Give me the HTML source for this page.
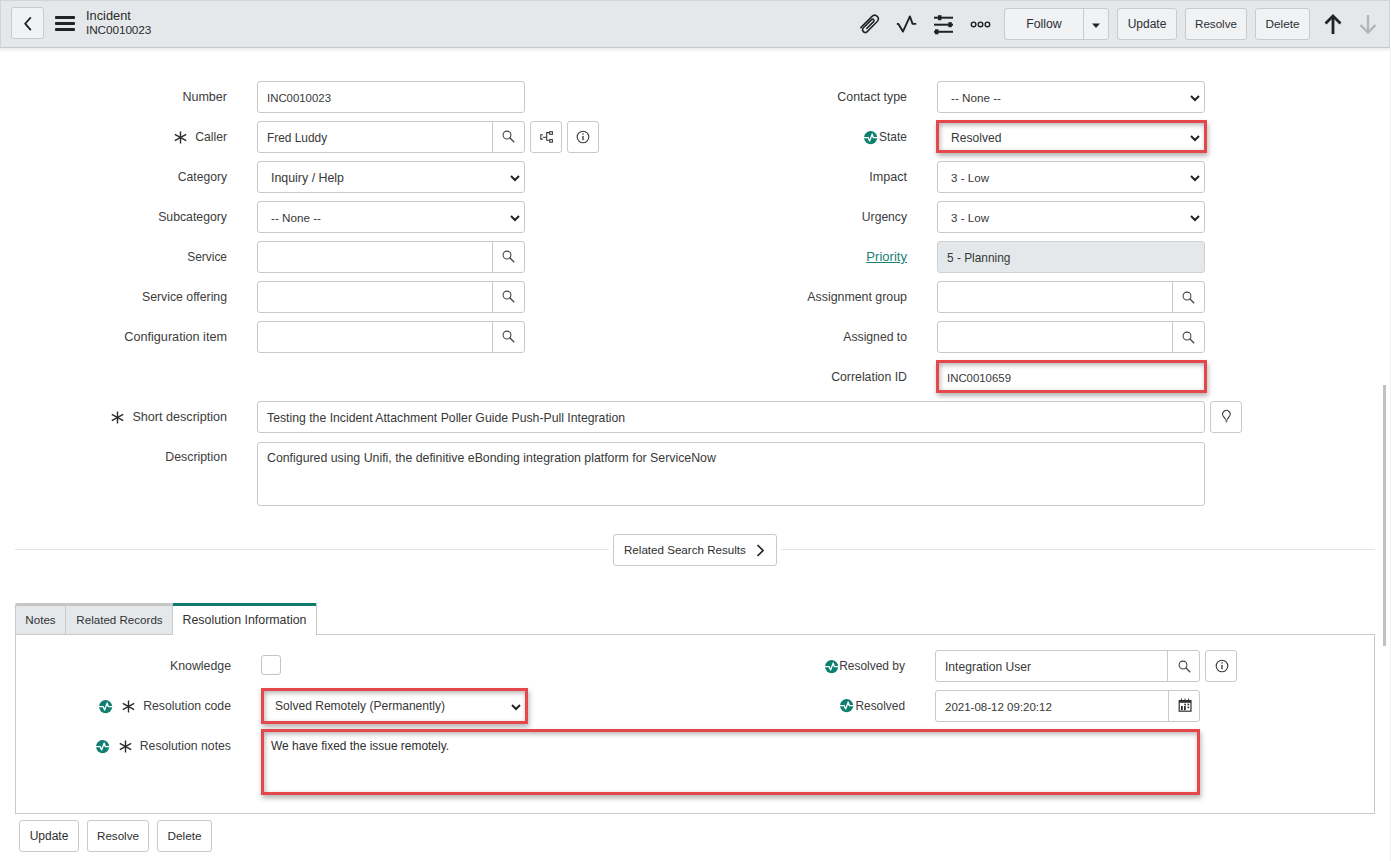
<!DOCTYPE html><html><head><meta charset="utf-8"><style>
*{box-sizing:border-box;}
html,body{margin:0;padding:0;}
body{width:1391px;height:861px;overflow:hidden;background:#fff;font-family:"Liberation Sans",sans-serif;font-size:12px;color:#2e2e2e;position:relative;}
.a{position:absolute;}
svg{position:absolute;overflow:visible;}
#hdr{left:0;top:0;width:1390px;height:48px;background:#e4e8eb;border:1px solid #d2d5d8;border-bottom:1px solid #c6c9cd;}
#hdrsh{left:0;top:48px;width:1390px;height:4px;background:linear-gradient(#ececec,#fff);}
.hb{position:absolute;top:8px;height:32px;background:#f1f2f4;border:1px solid #c8cbce;border-radius:3px;text-align:center;line-height:30px;color:#2b2f33;white-space:nowrap;}
.lbl{position:absolute;text-align:right;line-height:32px;height:32px;white-space:nowrap;color:#3c3c3c;font-size:12.1px;}
.inp{position:absolute;height:32px;border:1px solid #c9c9c9;border-radius:3px;background:#fff;line-height:32px;font-size:12.1px;padding-left:9px;white-space:nowrap;color:#383838;}
.sel{padding-left:13px;}
.btn{position:absolute;height:32px;border:1px solid #c9c9c9;border-radius:3px;background:#fff;}
.red{position:absolute;border:3px solid #e4474c;box-shadow:1px 3px 5px rgba(0,0,0,.3), inset 1px 2px 5px rgba(0,0,0,.3);}
.fb{position:absolute;height:32px;border:1px solid #c9c9c9;border-radius:3px;background:#fff;text-align:center;line-height:30px;color:#2e2e2e;}
</style></head><body>
<div id="hdr" class="a"></div><div id="hdrsh" class="a"></div>
<div class="hb" style="left:11px;top:7px;width:33px;"></div>
<svg style="left:22.5px;top:15.5px" width="10" height="16"><path d="M7.8 1.3 L2.2 7.7 L7.8 14.1" fill="none" stroke="#222" stroke-width="1.8"/></svg>
<div class="a" style="left:55px;top:16px;width:20px;height:3px;background:#222;border-radius:1px"></div>
<div class="a" style="left:55px;top:22px;width:20px;height:3px;background:#222;border-radius:1px"></div>
<div class="a" style="left:55px;top:28px;width:20px;height:3px;background:#222;border-radius:1px"></div>
<div class="a" style="left:86px;top:9px;line-height:14px;font-size:12.8px;color:#2b2b2b">Incident</div>
<div class="a" style="left:86px;top:23px;line-height:14px;font-size:11.8px;color:#2b2b2b;letter-spacing:-0.1px">INC0010023</div>
<svg style="left:859px;top:12px" width="22" height="22"><path d="M1.8 15.6 L12.8 4.6 Q15.6 1.8 18.2 4.4 Q20.8 7 18 9.8 L8.2 19.6 Q6.3 21.5 4.4 19.6 Q2.5 17.7 4.4 15.8 L12.6 7.6 Q13.6 6.6 14.6 7.6 Q15.6 8.6 14.6 9.6 L7.8 16.4" fill="none" stroke="#222" stroke-width="1.5" stroke-linejoin="round" stroke-linecap="round"/></svg>
<svg style="left:896px;top:13px" width="22" height="22"><path d="M0.8 10.9 H2.4 L6.9 18.6 L13.9 3.4 L16.6 10.9 H20.3" fill="none" stroke="#222" stroke-width="1.9" stroke-linejoin="round"/></svg>
<svg style="left:934px;top:13px" width="20" height="22"><g stroke="#222" stroke-width="2"><path d="M0 4.7 H19"/><path d="M0 11.7 H19"/><path d="M0 18.8 H19"/></g><rect x="4" y="2.2" width="3.5" height="5" fill="#222"/><rect x="14.3" y="9.2" width="3.5" height="5" fill="#222"/><rect x="1" y="16.3" width="3.5" height="5" fill="#222"/></svg>
<svg style="left:969px;top:19px" width="24" height="12"><g fill="none" stroke="#222" stroke-width="1.4"><circle cx="4.6" cy="5.4" r="2.3"/><circle cx="11.5" cy="5.4" r="2.3"/><circle cx="18.4" cy="5.4" r="2.3"/></g></svg>
<div class="hb" style="left:1004px;width:105px;"></div>
<div class="a" style="left:1083px;top:9px;width:1px;height:30px;background:#c8cbce"></div>
<div class="a" style="left:1004px;top:8px;width:80px;line-height:32px;text-align:center;color:#2b2f33;font-size:12.3px">Follow</div>
<svg style="left:1091px;top:23px" width="10" height="6"><path d="M1 0.5 H9 L5 5 Z" fill="#222"/></svg>
<div class="hb" style="left:1117px;width:60px;">Update</div>
<div class="hb" style="left:1185px;width:62px;"><span style="font-size:11.6px">Resolve</span></div>
<div class="hb" style="left:1255px;width:55px;"><span style="font-size:11.8px">Delete</span></div>
<svg style="left:1324px;top:14px" width="20" height="21"><g fill="none" stroke="#222" stroke-width="2.8"><path d="M9 2.5 V20"/><path d="M1.5 9.5 L9 2 L16.5 9.5"/></g></svg>
<svg style="left:1359px;top:14px" width="20" height="21"><g fill="none" stroke="#b3b6b9" stroke-width="2.3"><path d="M9 1 V18.5"/><path d="M1.5 11 L9 18.5 L16.5 11"/></g></svg>
<div class="lbl" style="left:0;width:227px;top:81px;font-size:12.56px">Number</div>
<div class="inp" style="left:257px;top:81px;width:268px"><span style="font-size:11.4px">INC0010023</span></div>
<div class="lbl" style="left:0;width:227px;top:121px;font-size:12.2px">Caller</div>
<div class="inp" style="left:257px;top:121px;width:268px"><span style="font-size:11.9px">Fred Luddy</span></div>
<div class="a" style="left:492px;top:121px;width:1px;height:32px;background:#c9c9c9"></div>
<svg style="left:501.6px;top:130.4px" width="14" height="14"><circle cx="5" cy="5" r="3.9" fill="none" stroke="#444" stroke-width="1.05"/><path d="M7.8 7.8 L12.2 12.2" stroke="#444" stroke-width="1.25"/></svg>
<div class="lbl" style="left:0;width:227px;top:161px;font-size:12.13px">Category</div>
<div class="inp sel" style="left:257px;top:161px;width:268px"><span style="font-size:12.4px">Inquiry / Help</span></div>
<svg style="left:510px;top:175px" width="10" height="6"><path d="M1 1 L5 5 L9 1" fill="none" stroke="#222" stroke-width="2"/></svg>
<div class="lbl" style="left:0;width:227px;top:201px;font-size:12.27px">Subcategory</div>
<div class="inp sel" style="left:257px;top:201px;width:268px"><span style="font-size:11.7px">-- None --</span></div>
<svg style="left:510px;top:215px" width="10" height="6"><path d="M1 1 L5 5 L9 1" fill="none" stroke="#222" stroke-width="2"/></svg>
<div class="lbl" style="left:0;width:227px;top:241px;font-size:11.93px">Service</div>
<div class="inp" style="left:257px;top:241px;width:268px"></div>
<div class="a" style="left:492px;top:241px;width:1px;height:32px;background:#c9c9c9"></div>
<svg style="left:501.6px;top:250.4px" width="14" height="14"><circle cx="5" cy="5" r="3.9" fill="none" stroke="#444" stroke-width="1.05"/><path d="M7.8 7.8 L12.2 12.2" stroke="#444" stroke-width="1.25"/></svg>
<div class="lbl" style="left:0;width:227px;top:281px;font-size:12.27px">Service offering</div>
<div class="inp" style="left:257px;top:281px;width:268px"></div>
<div class="a" style="left:492px;top:281px;width:1px;height:32px;background:#c9c9c9"></div>
<svg style="left:501.6px;top:290.4px" width="14" height="14"><circle cx="5" cy="5" r="3.9" fill="none" stroke="#444" stroke-width="1.05"/><path d="M7.8 7.8 L12.2 12.2" stroke="#444" stroke-width="1.25"/></svg>
<div class="lbl" style="left:0;width:227px;top:321px;font-size:12.67px">Configuration item</div>
<div class="inp" style="left:257px;top:321px;width:268px"></div>
<div class="a" style="left:492px;top:321px;width:1px;height:32px;background:#c9c9c9"></div>
<svg style="left:501.6px;top:330.4px" width="14" height="14"><circle cx="5" cy="5" r="3.9" fill="none" stroke="#444" stroke-width="1.05"/><path d="M7.8 7.8 L12.2 12.2" stroke="#444" stroke-width="1.25"/></svg>
<svg style="left:174px;top:131px" width="13" height="13"><g stroke="#2a2a2a" stroke-width="1.4" fill="none"><path d="M6.5 0.5 V12.5"/><path d="M0.8 3.4 L12.2 9.6"/><path d="M0.8 9.6 L12.2 3.4"/></g></svg>
<div class="btn" style="left:530px;top:121px;width:32px"></div>
<svg style="left:530px;top:122px" width="32" height="30"><g fill="none" stroke="#333" stroke-width="1.05"><path d="M12.9 12.7 H10.8 V17.1 H12.9"/><path d="M13 15.3 H16.7"/><path d="M16.7 10.6 V18.2 M16.2 10.6 H19.4 M16.2 18.2 H19.4"/><rect x="19.7" y="9.7" width="2.7" height="2.6"/><rect x="19.7" y="17.6" width="2.7" height="2.6"/></g></svg>
<div class="btn" style="left:567px;top:121px;width:32px"></div>
<svg style="left:575.3px;top:129.2px" width="16" height="16"><circle cx="8" cy="8" r="5.8" fill="none" stroke="#3a3a3a" stroke-width="1.1"/><rect x="7.35" y="6.9" width="1.3" height="4.3" fill="#333"/><rect x="7.35" y="4.3" width="1.3" height="1.3" fill="#333"/></svg>
<div class="lbl" style="left:700px;width:207px;top:81px;font-size:12.42px">Contact type</div>
<div class="inp sel" style="left:937px;top:81px;width:268px"><span style="font-size:11.7px">-- None --</span></div>
<svg style="left:1190px;top:95px" width="10" height="6"><path d="M1 1 L5 5 L9 1" fill="none" stroke="#222" stroke-width="2"/></svg>
<div class="lbl" style="left:700px;width:207px;top:121px;font-size:11.98px">State</div>
<div class="inp sel" style="left:937px;top:121px;width:268px">Resolved</div>
<svg style="left:1190px;top:135px" width="10" height="6"><path d="M1 1 L5 5 L9 1" fill="none" stroke="#222" stroke-width="2"/></svg>
<div class="lbl" style="left:700px;width:207px;top:161px;font-size:12.59px">Impact</div>
<div class="inp sel" style="left:937px;top:161px;width:268px"><span style="font-size:11.6px">3 - Low</span></div>
<svg style="left:1190px;top:175px" width="10" height="6"><path d="M1 1 L5 5 L9 1" fill="none" stroke="#222" stroke-width="2"/></svg>
<div class="lbl" style="left:700px;width:207px;top:201px;font-size:12.13px">Urgency</div>
<div class="inp sel" style="left:937px;top:201px;width:268px"><span style="font-size:11.6px">3 - Low</span></div>
<svg style="left:1190px;top:215px" width="10" height="6"><path d="M1 1 L5 5 L9 1" fill="none" stroke="#222" stroke-width="2"/></svg>
<div class="lbl" style="left:700px;width:207px;top:241px;color:#1b7f72;text-decoration:underline;font-size:13.09px">Priority</div>
<div class="inp" style="left:937px;top:241px;width:268px;background:#e4e8eb;border-color:#cfd2d5"><span style="font-size:11.9px">5 - Planning</span></div>
<div class="lbl" style="left:700px;width:207px;top:281px;font-size:12.38px">Assignment group</div>
<div class="inp" style="left:937px;top:281px;width:268px"></div>
<div class="a" style="left:1172px;top:281px;width:1px;height:32px;background:#c9c9c9"></div>
<svg style="left:1182.2px;top:290.6px" width="14" height="14"><circle cx="5" cy="5" r="3.9" fill="none" stroke="#444" stroke-width="1.05"/><path d="M7.8 7.8 L12.2 12.2" stroke="#444" stroke-width="1.25"/></svg>
<div class="lbl" style="left:700px;width:207px;top:321px;font-size:12.2px">Assigned to</div>
<div class="inp" style="left:937px;top:321px;width:268px"></div>
<div class="a" style="left:1172px;top:321px;width:1px;height:32px;background:#c9c9c9"></div>
<svg style="left:1182.2px;top:330.6px" width="14" height="14"><circle cx="5" cy="5" r="3.9" fill="none" stroke="#444" stroke-width="1.05"/><path d="M7.8 7.8 L12.2 12.2" stroke="#444" stroke-width="1.25"/></svg>
<div class="lbl" style="left:700px;width:207px;top:361px;font-size:12.31px">Correlation ID</div>
<div class="inp" style="left:937px;top:361px;width:268px"><span style="font-size:11.4px">INC0010659</span></div>
<svg style="left:863.8px;top:130.8px" width="13.2" height="13.2"><circle cx="6.6" cy="6.6" r="6.6" fill="#0f7f70"/><path d="M0 6.6 H4.1 L5.6 10.0 L8.2 2.9999999999999996 L9.3 6.6 H13.2" fill="none" stroke="#fff" stroke-width="1.3" stroke-linejoin="round"/></svg>
<div class="red" style="left:936px;top:120px;width:271px;height:33px"></div>
<div class="red" style="left:936px;top:360px;width:271px;height:33px"></div>
<svg style="left:111px;top:411px" width="13" height="13"><g stroke="#2a2a2a" stroke-width="1.4" fill="none"><path d="M6.5 0.5 V12.5"/><path d="M0.8 3.4 L12.2 9.6"/><path d="M0.8 9.6 L12.2 3.4"/></g></svg>
<div class="lbl" style="left:0;width:227px;top:401px;font-size:12.61px">Short description</div>
<div class="inp" style="left:257px;top:401px;width:948px"><span style="font-size:12.25px">Testing the Incident Attachment Poller Guide Push-Pull Integration</span></div>
<div class="btn" style="left:1210px;top:401px;width:32px"></div>
<svg style="left:1220px;top:408px" width="13" height="16"><g fill="none" stroke="#3a3a3a" stroke-width="1.05"><path d="M5.6 11.4 L3.6 8.6 A3.7 3.7 0 1 1 9.2 8.6 L7.2 11.4"/><path d="M5.5 12.6 L7.5 11.8 M5.7 14 L7.3 13.4"/></g></svg>
<div class="lbl" style="left:0;width:227px;top:441px;font-size:12.34px">Description</div>
<div class="inp" style="left:257px;top:442px;width:948px;height:64px;line-height:30px"><span style="font-size:12.34px">Configured using Unifi, the definitive eBonding integration platform for ServiceNow</span></div>
<div class="a" style="left:15px;top:549px;width:594px;height:1px;background:#e3e3e3"></div>
<div class="a" style="left:781px;top:549px;width:594px;height:1px;background:#e3e3e3"></div>
<div class="btn" style="left:613px;top:534px;width:164px;height:32px"></div>
<div class="a" style="left:624px;top:534px;line-height:32px;color:#2e2e2e"><span style="font-size:11.6px">Related Search Results</span></div>
<svg style="left:756px;top:544px" width="9" height="13"><path d="M1.5 1 L7 6.5 L1.5 12" fill="none" stroke="#222" stroke-width="1.7"/></svg>
<div class="a" style="left:15px;top:634px;width:1360px;height:180px;border:1px solid #c9c9c9;border-top:none"></div>
<div class="a" style="left:316px;top:634px;width:1059px;height:1px;background:#c9c9c9"></div>
<div class="a" style="left:15px;top:603px;width:158px;height:32px;background:#e4e8eb;border:1px solid #c9c9c9;border-top:3px solid #c6c6c6;border-radius:2px 2px 0 0"></div>
<div class="a" style="left:65px;top:606px;width:1px;height:28px;background:#c9c9c9"></div>
<div class="a" style="left:172px;top:603px;width:145px;height:32px;background:#fff;border:1px solid #c9c9c9;border-bottom:none;border-top:3px solid #0f7b6d;border-radius:2px 2px 0 0"></div>
<div class="a" style="left:15px;top:606px;width:51px;line-height:28px;text-align:center;color:#333"><span style="font-size:11.64px">Notes</span></div>
<div class="a" style="left:66px;top:606px;width:107px;line-height:28px;text-align:center;color:#333"><span style="font-size:11.6px">Related Records</span></div>
<div class="a" style="left:173px;top:606px;width:143px;line-height:28px;text-align:center;color:#333"><span style="font-size:12.4px">Resolution Information</span></div>
<div class="lbl" style="left:0;width:231px;top:650px;font-size:12.33px">Knowledge</div>
<div class="a" style="left:261px;top:655px;width:20px;height:20px;border:1px solid #c4c4c4;border-radius:3px;background:#fff"></div>
<svg style="left:99.0px;top:699.8px" width="13.2" height="13.2"><circle cx="6.6" cy="6.6" r="6.6" fill="#0f7f70"/><path d="M0 6.6 H4.1 L5.6 10.0 L8.2 2.9999999999999996 L9.3 6.6 H13.2" fill="none" stroke="#fff" stroke-width="1.3" stroke-linejoin="round"/></svg>
<svg style="left:122px;top:700.2px" width="13" height="13"><g stroke="#2a2a2a" stroke-width="1.4" fill="none"><path d="M6.5 0.5 V12.5"/><path d="M0.8 3.4 L12.2 9.6"/><path d="M0.8 9.6 L12.2 3.4"/></g></svg>
<div class="lbl" style="left:0;width:231px;top:690px;font-size:12.26px">Resolution code</div>
<div class="inp sel" style="left:263px;top:690px;width:263px;height:32px;border:none;line-height:32px;padding-left:12px"><span style="font-size:12.05px">Solved Remotely (Permanently)</span></div>
<svg style="left:511px;top:704px" width="10" height="6"><path d="M1 1 L5 5 L9 1" fill="none" stroke="#222" stroke-width="2"/></svg>
<div class="red" style="left:261px;top:688px;width:267px;height:36px"></div>
<svg style="left:95.60000000000001px;top:739.6999999999999px" width="13.2" height="13.2"><circle cx="6.6" cy="6.6" r="6.6" fill="#0f7f70"/><path d="M0 6.6 H4.1 L5.6 10.0 L8.2 2.9999999999999996 L9.3 6.6 H13.2" fill="none" stroke="#fff" stroke-width="1.3" stroke-linejoin="round"/></svg>
<svg style="left:119px;top:739.8px" width="13" height="13"><g stroke="#2a2a2a" stroke-width="1.4" fill="none"><path d="M6.5 0.5 V12.5"/><path d="M0.8 3.4 L12.2 9.6"/><path d="M0.8 9.6 L12.2 3.4"/></g></svg>
<div class="lbl" style="left:0;width:231px;top:730px;font-size:12.26px">Resolution notes</div>
<div class="a" style="left:271px;top:731px;line-height:30px;color:#2e2e2e"><span style="font-size:11.94px">We have fixed the issue remotely.</span></div>
<div class="red" style="left:261px;top:729px;width:939px;height:66px"></div>
<svg style="left:824.9px;top:659.9px" width="13.2" height="13.2"><circle cx="6.6" cy="6.6" r="6.6" fill="#0f7f70"/><path d="M0 6.6 H4.1 L5.6 10.0 L8.2 2.9999999999999996 L9.3 6.6 H13.2" fill="none" stroke="#fff" stroke-width="1.3" stroke-linejoin="round"/></svg>
<div class="lbl" style="left:700px;width:205px;top:650px;font-size:11.98px">Resolved by</div>
<div class="inp" style="left:935px;top:650px;width:265px">Integration User</div>
<div class="a" style="left:1167px;top:650px;width:1px;height:32px;background:#c9c9c9"></div>
<svg style="left:1177.6px;top:659.5px" width="14" height="14"><circle cx="5" cy="5" r="3.9" fill="none" stroke="#444" stroke-width="1.05"/><path d="M7.8 7.8 L12.2 12.2" stroke="#444" stroke-width="1.25"/></svg>
<div class="btn" style="left:1205px;top:650px;width:32px"></div>
<svg style="left:1213.8px;top:658.4px" width="16" height="16"><circle cx="8" cy="8" r="5.8" fill="none" stroke="#3a3a3a" stroke-width="1.1"/><rect x="7.35" y="6.9" width="1.3" height="4.3" fill="#333"/><rect x="7.35" y="4.3" width="1.3" height="1.3" fill="#333"/></svg>
<svg style="left:840.4px;top:699.4px" width="13.2" height="13.2"><circle cx="6.6" cy="6.6" r="6.6" fill="#0f7f70"/><path d="M0 6.6 H4.1 L5.6 10.0 L8.2 2.9999999999999996 L9.3 6.6 H13.2" fill="none" stroke="#fff" stroke-width="1.3" stroke-linejoin="round"/></svg>
<div class="lbl" style="left:700px;width:205px;top:690px;font-size:11.88px">Resolved</div>
<div class="inp" style="left:935px;top:690px;width:265px"><span style="font-size:11.5px">2021-08-12 09:20:12</span></div>
<div class="a" style="left:1168px;top:690px;width:1px;height:32px;background:#c9c9c9"></div>
<svg style="left:1178px;top:698px" width="15" height="15"><g fill="#333"><rect x="1.2" y="2.6" width="11.8" height="10.6" fill="none" stroke="#333" stroke-width="1.2"/><rect x="1" y="2.2" width="12" height="2.6"/><rect x="3" y="0.6" width="1" height="1.6"/><rect x="6.5" y="0.6" width="1" height="1.6"/><rect x="10" y="0.6" width="1" height="1.6"/><rect x="6.3" y="5.7" width="1.7" height="1.6"/><rect x="9.5" y="5.7" width="1.7" height="1.6"/><rect x="9.5" y="8.6" width="1.7" height="1.6"/><rect x="3" y="8" width="1.8" height="4.2"/><rect x="6" y="8" width="1.8" height="4.2"/></g></svg>
<div class="fb" style="left:19px;top:820px;width:60px">Update</div>
<div class="fb" style="left:87px;top:820px;width:62px"><span style="font-size:11.6px">Resolve</span></div>
<div class="fb" style="left:157px;top:820px;width:55px"><span style="font-size:11.8px">Delete</span></div>
<div class="a" style="left:1383px;top:385px;width:3px;height:261px;background:#c1c1c1"></div>
<div class="a" style="left:1390px;top:48px;width:1px;height:813px;background:#eef0f3"></div>
</body></html>
